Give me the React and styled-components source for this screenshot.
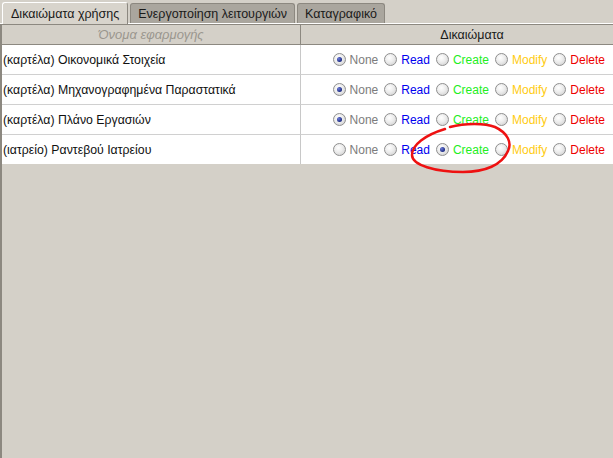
import React from "react";
import styled, { createGlobalStyle, css } from "styled-components";

const GlobalStyle = createGlobalStyle`
  html, body {
    margin: 0;
    padding: 0;
    background: #d4d0c8;
    font-family: "Liberation Sans", Arial, sans-serif;
  }
`;

const Page = styled.div`
  width: 613px;
  height: 458px;
  position: relative;
  overflow: hidden;
  background: #d4d0c8;
`;

const TabBar = styled.div`
  display: flex;
  align-items: flex-end;
  gap: 2px;
  height: 23px;
  padding-left: 2px;
  border-bottom: 1px solid #ffffff;
`;

const Tab = styled.div`
  height: 19px;
  padding: 0 7px;
  display: flex;
  align-items: center;
  font-size: 12.5px;
  color: #1a1a1a;
  background: #aaa69e;
  border: 1px solid #8c8880;
  border-bottom: none;
  border-radius: 3px 3px 0 0;
  ${(p) =>
    p.active &&
    css`
      height: 21px;
      margin-bottom: -1px;
      background: #d8d4cc;
      border-color: #ffffff #8c8880 #d8d4cc #ffffff;
      padding: 0 8px;
    `}
`;

const Panel = styled.div`
  border-left: 2px solid #8c8880;
  height: 100%;
`;

const Grid = styled.div`
  display: grid;
  grid-template-columns: 299px 1fr;
  border-top: 1px solid #8c8880;
`;

const HeadCell = styled.div`
  height: 19px;
  display: flex;
  align-items: center;
  justify-content: center;
  font-size: ${(p) => (p.muted ? "13px" : "12.5px")};
  background: #d4d0c8;
  border-bottom: 1px solid #8c8880;
  border-right: ${(p) => (p.first ? "1px solid #8c8880" : "none")};
  padding-left: ${(p) => (p.first ? "0" : "30px")};
  color: ${(p) => (p.muted ? "#9a968e" : "#1a1a1a")};
  font-style: ${(p) => (p.muted ? "italic" : "normal")};
`;

const Cell = styled.div`
  height: 29px;
  display: flex;
  align-items: center;
  background: #ffffff;
  font-size: 12.3px;
  color: #111;
  border-bottom: ${(p) => (p.last ? "none" : "1px solid #d0d0d0")};
  border-right: ${(p) => (p.first ? "1px solid #c8c8c8" : "none")};
  padding-left: ${(p) => (p.first ? "1px" : "0")};
  justify-content: ${(p) => (p.first ? "flex-start" : "flex-end")};
  padding-right: ${(p) => (p.first ? "0" : "8px")};
`;

const Options = styled.div`
  display: flex;
  align-items: center;
  gap: 6px;
`;

const Option = styled.label`
  display: flex;
  align-items: center;
  gap: 4px;
  font-size: 12px;
  color: ${(p) => p.color};
`;

const Radio = styled.span`
  width: 11px;
  height: 11px;
  border-radius: 50%;
  border: 1px solid #8e8e8e;
  background: radial-gradient(circle at 40% 35%, #ffffff 0%, #ececec 45%, #c9c9c9 100%);
  display: flex;
  align-items: center;
  justify-content: center;
  &::after {
    content: "";
    display: ${(p) => (p.checked ? "block" : "none")};
    width: 5px;
    height: 5px;
    border-radius: 50%;
    background: radial-gradient(circle at 35% 35%, #6c7ad8 0%, #1b2a80 70%);
  }
`;

const Annotation = styled.svg`
  position: absolute;
  left: 400px;
  top: 115px;
  pointer-events: none;
`;

const perms = [
  { name: "None", color: "#7c7c7c" },
  { name: "Read", color: "#0000ee" },
  { name: "Create", color: "#22ee22" },
  { name: "Modify", color: "#ffcc11" },
  { name: "Delete", color: "#ee0000" },
];

const rows = [
  { label: "(καρτέλα) Οικονομικά Στοιχεία", value: "None" },
  { label: "(καρτέλα) Μηχανογραφημένα Παραστατικά", value: "None" },
  { label: "(καρτέλα) Πλάνο Εργασιών", value: "None" },
  { label: "(ιατρείο) Ραντεβού Ιατρείου", value: "Create" },
];

export default function App() {
  return (
    <Page>
      <GlobalStyle />
      <TabBar>
        <Tab active>Δικαιώματα χρήσης</Tab>
        <Tab>Ενεργοποίηση λειτουργιών</Tab>
        <Tab>Καταγραφικό</Tab>
      </TabBar>
      <Panel>
        <Grid>
          <HeadCell first muted>
            Όνομα εφαρμογής
          </HeadCell>
          <HeadCell>Δικαιώματα</HeadCell>
          {rows.map((r, i) => (
            <React.Fragment key={r.label}>
              <Cell first last={i === rows.length - 1}>
                {r.label}
              </Cell>
              <Cell last={i === rows.length - 1}>
                <Options>
                  {perms.map((p) => (
                    <Option key={p.name} color={p.color}>
                      <Radio checked={p.name === r.value} />
                      {p.name}
                    </Option>
                  ))}
                </Options>
              </Cell>
            </React.Fragment>
          ))}
        </Grid>
      </Panel>
      <Annotation width="120" height="65" viewBox="0 0 120 65">
        <path
          d="M50 12 C 65 8, 85 8, 95 12 C 108 18, 112 28, 108 36 C 102 50, 85 57, 63 57 C 35 57, 12 50, 12 40 C 12 30, 25 20, 45 14"
          fill="none"
          stroke="#ee1111"
          strokeWidth="2.5"
          strokeLinecap="round"
        />
      </Annotation>
    </Page>
  );
}
